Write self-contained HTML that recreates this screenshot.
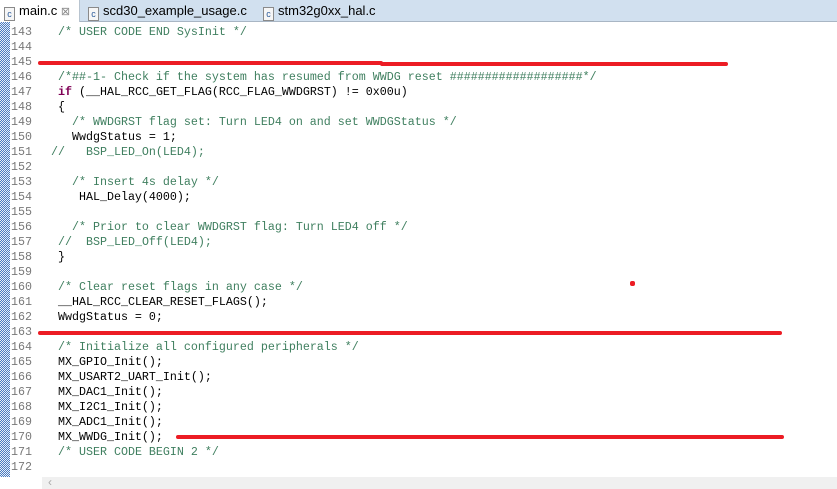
<!DOCTYPE html>
<html><head><meta charset="utf-8"><style>
body{margin:0;width:837px;height:489px;overflow:hidden;background:#fff;font-family:"Liberation Sans",sans-serif;position:relative}
.tabs{position:absolute;left:0;top:0;width:837px;height:21px;background:#d1e0ef;border-bottom:1px solid #a9b6c4}
.tab{position:absolute;top:0;height:21px;font-size:13px;line-height:22px;color:#000}
.tab.active{background:#fff;border-right:1px solid #b8c4d0;height:22px}
.ic{display:inline-block;width:9px;height:12px;border:1px solid #8a8a8a;font-size:9px;line-height:12px;text-align:center;color:#2a5a9a;vertical-align:-2px;margin-right:4px;background:#f6f6f6}
.dots{position:absolute;left:0;top:22px;width:10px;height:455px;background-image:linear-gradient(45deg,#4a7cc0 25%,transparent 25%,transparent 75%,#4a7cc0 75%),linear-gradient(45deg,#4a7cc0 25%,transparent 25%,transparent 75%,#4a7cc0 75%);background-size:2px 2px;background-position:0 0,1px 1px;background-color:#e8eef8}
.code{position:absolute;left:0;top:25px;font-family:"Liberation Mono",monospace;font-size:11.67px;line-height:15px;white-space:pre}
.ln{position:absolute;left:11px;width:30px;color:#787878}
.tx{position:absolute;left:44px;color:#000}
.c{color:#3f7f5f}.k{color:#7f0055;font-weight:bold}
.red{position:absolute;background:#ec1c24;height:4px;border-radius:2px}
.scroll{position:absolute;left:42px;top:477px;width:795px;height:12px;background:#f0f0f0}
</style></head><body>
<div class="tabs">
<div class="tab active" style="left:0;width:80px;padding-left:4px;box-sizing:border-box"><span class="ic">c</span>main.c <span style="color:#888;font-size:11px">⊠</span></div>
<div class="tab" style="left:88px"><span class="ic">c</span>scd30_example_usage.c</div>
<div class="tab" style="left:263px"><span class="ic">c</span>stm32g0xx_hal.c</div>
</div>
<div class="dots"></div>
<div class="code">
<div class="ln" style="top:0">143
144
145
146
147
148
149
150
151
152
153
154
155
156
157
158
159
160
161
162
163
164
165
166
167
168
169
170
171
172</div>
<div class="tx" style="top:0">  <span class="c">/* USER CODE END SysInit */</span>


  <span class="c">/*##-1- Check if the system has resumed from WWDG reset ###################*/</span>
  <span class="k">if</span> (__HAL_RCC_GET_FLAG(RCC_FLAG_WWDGRST) != 0x00u)
  {
    <span class="c">/* WWDGRST flag set: Turn LED4 on and set WWDGStatus */</span>
    WwdgStatus = 1;
 <span class="c">//   BSP_LED_On(LED4);</span>

    <span class="c">/* Insert 4s delay */</span>
     HAL_Delay(4000);

    <span class="c">/* Prior to clear WWDGRST flag: Turn LED4 off */</span>
  <span class="c">//  BSP_LED_Off(LED4);</span>
  }

  <span class="c">/* Clear reset flags in any case */</span>
  __HAL_RCC_CLEAR_RESET_FLAGS();
  WwdgStatus = 0;

  <span class="c">/* Initialize all configured peripherals */</span>
  MX_GPIO_Init();
  MX_USART2_UART_Init();
  MX_DAC1_Init();
  MX_I2C1_Init();
  MX_ADC1_Init();
  MX_WWDG_Init();
  <span class="c">/* USER CODE BEGIN 2 */</span>
</div>
</div>
<div class="red" style="left:38px;top:61px;width:345px"></div>
<div class="red" style="left:380px;top:62px;width:348px"></div>
<div class="red" style="left:38px;top:331px;width:744px"></div>
<div class="red" style="left:176px;top:435px;width:608px"></div>
<div class="red" style="left:630px;top:281px;width:5px;height:5px"></div>
<div class="scroll"><span style="position:absolute;left:6px;top:-2px;color:#aaa;font-size:12px">‹</span></div>
</body></html>
